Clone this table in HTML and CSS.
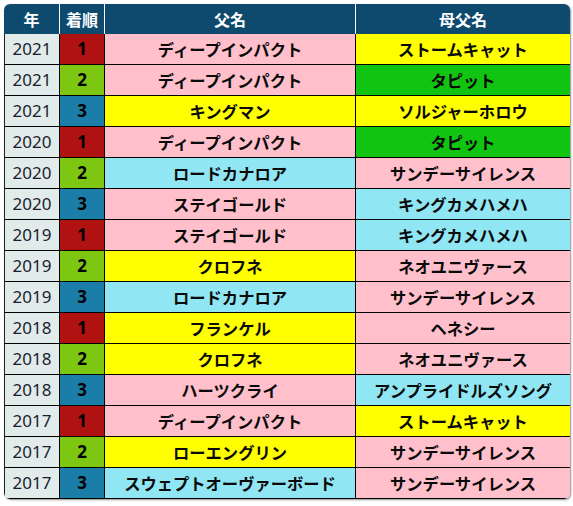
FILE: index.html
```html
<!DOCTYPE html>
<html lang="ja">
<head>
<meta charset="utf-8">
<link rel="stylesheet" href="styles.css">
</head>
<body>
<div class="wrap">
<table class="tbl">
<colgroup><col class="c-year"><col class="c-rank"><col class="c-sire"><col class="c-bms"></colgroup>
<thead>
<tr><th>年</th><th>着順</th><th>父名</th><th class="last">母父名</th></tr>
</thead>
<tbody>
<tr><td class="year">2021</td><td class="rank r1">1</td><td class="pink">ディープインパクト</td><td class="yellow">ストームキャット</td></tr>
<tr><td class="year">2021</td><td class="rank r2">2</td><td class="pink">ディープインパクト</td><td class="green">タピット</td></tr>
<tr><td class="year">2021</td><td class="rank r3">3</td><td class="yellow">キングマン</td><td class="yellow">ソルジャーホロウ</td></tr>
<tr><td class="year">2020</td><td class="rank r1">1</td><td class="pink">ディープインパクト</td><td class="green">タピット</td></tr>
<tr><td class="year">2020</td><td class="rank r2">2</td><td class="blue">ロードカナロア</td><td class="pink">サンデーサイレンス</td></tr>
<tr><td class="year">2020</td><td class="rank r3">3</td><td class="pink">ステイゴールド</td><td class="blue">キングカメハメハ</td></tr>
<tr><td class="year">2019</td><td class="rank r1">1</td><td class="pink">ステイゴールド</td><td class="blue">キングカメハメハ</td></tr>
<tr><td class="year">2019</td><td class="rank r2">2</td><td class="yellow">クロフネ</td><td class="pink">ネオユニヴァース</td></tr>
<tr><td class="year">2019</td><td class="rank r3">3</td><td class="blue">ロードカナロア</td><td class="pink">サンデーサイレンス</td></tr>
<tr><td class="year">2018</td><td class="rank r1">1</td><td class="yellow">フランケル</td><td class="pink">ヘネシー</td></tr>
<tr><td class="year">2018</td><td class="rank r2">2</td><td class="yellow">クロフネ</td><td class="pink">ネオユニヴァース</td></tr>
<tr><td class="year">2018</td><td class="rank r3">3</td><td class="pink">ハーツクライ</td><td class="blue">アンプライドルズソング</td></tr>
<tr><td class="year">2017</td><td class="rank r1">1</td><td class="pink">ディープインパクト</td><td class="yellow">ストームキャット</td></tr>
<tr><td class="year">2017</td><td class="rank r2">2</td><td class="yellow">ローエングリン</td><td class="pink">サンデーサイレンス</td></tr>
<tr><td class="year">2017</td><td class="rank r3">3</td><td class="blue">スウェプトオーヴァーボード</td><td class="pink">サンデーサイレンス</td></tr>
</tbody>
</table>
</div>
</body>
</html>
```

FILE: styles.css
```css
html, body {
  margin: 0;
  padding: 0;
  background: #ffffff;
}
body {
  padding: 4px;
  font-family: "Noto Sans CJK JP", "Noto Sans", sans-serif;
}
.wrap {
  width: 566px;
  border-radius: 6px;
  overflow: hidden;
  box-shadow: 1px 1px 2px rgba(0, 0, 0, 0.45);
}
.tbl {
  width: 566px;
  table-layout: fixed;
  border-collapse: separate;
  border-spacing: 0;
}
.c-year { width: 56px; }
.c-rank { width: 45px; }
.c-sire { width: 251px; }
.c-bms { width: 214px; }
.tbl th {
  background: #0d4a6d;
  color: #ffffff;
  font-weight: bold;
  font-size: 16px;
  line-height: 30px;
  padding: 0;
  text-align: center;
  border-right: 1px solid #ffffff;
}
.tbl th.last {
  border-right: none;
}
.tbl td {
  padding: 0;
  font-size: 16.3px;
  font-weight: bold;
  line-height: 30px;
  text-align: center;
  color: #0a0a0a;
  border-bottom: 1px solid #000000;
  border-right: 1px solid #000000;
  white-space: nowrap;
}
.tbl td:last-child {
  border-right: none;
}
.tbl td.year {
  background: #e0ebea;
  font-family: "Noto Sans", sans-serif;
  font-size: 17px;
  font-weight: normal;
  color: #1c1c30;
  border-left: 1px solid #222222;
}
.tbl td.rank {
  font-family: "Noto Sans", sans-serif;
  font-size: 17px;
  color: #000000;
}
.r1 { background: #b01212; }
.r2 { background: #7dc612; }
.r3 { background: #1a7ea8; }
.pink { background: #ffc0cb; }
.yellow { background: #ffff00; }
.blue { background: #91e6f4; }
.green { background: #12c412; }
```
